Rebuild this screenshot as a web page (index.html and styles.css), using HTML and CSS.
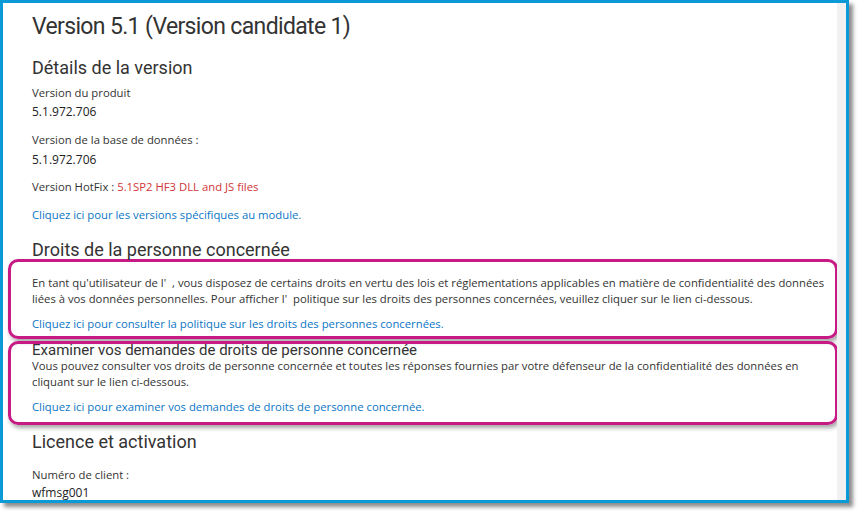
FILE: index.html
```html
<!DOCTYPE html>
<html lang="fr">
<head>
<meta charset="utf-8">
<link rel="stylesheet" href="styles.css">
</head>
<body>
<div class="frame">
  <div class="content">
    <h1 class="title">Version 5.1 (Version candidate 1)</h1>
    <h2 class="h2 first">Détails de la version</h2>
    <div class="label m6">Version du produit</div>
    <div class="value m3">5.1.972.706</div>
    <div class="label m12">Version de la base de données :</div>
    <div class="value m4">5.1.972.706</div>
    <div class="label m11">Version HotFix : <span class="red">5.1SP2 HF3 DLL and JS files</span></div>
    <div class="link m12">Cliquez ici pour les versions spécifiques au module.</div>
    <h2 class="h2 droits">Droits de la personne concernée</h2>
    <div class="box box1">
      <p class="para">En tant qu'utilisateur de l'&nbsp;&nbsp;, vous disposez de certains droits en vertu des lois et réglementations applicables en matière de confidentialité des données liées à vos données personnelles. Pour afficher l'&nbsp; politique sur les droits des personnes concernées, veuillez cliquer sur le lien ci-dessous.</p>
      <div class="link m9">Cliquez ici pour consulter la politique sur les droits des personnes concernées.</div>
    </div>
    <div class="box box2">
      <h3 class="h3">Examiner vos demandes de droits de personne concernée</h3>
      <p class="para m2">Vous pouvez consulter vos droits de personne concernée et toutes les réponses fournies par votre défenseur de la confidentialité des données en cliquant sur le lien ci-dessous.</p>
      <div class="link m9">Cliquez ici pour examiner vos demandes de droits de personne concernée.</div>
    </div>
    <h2 class="h2 licence">Licence et activation</h2>
    <div class="label m14">Numéro de client :</div>
    <div class="value m2">wfmsg001</div>
  </div>
  <div class="scrollbar"></div>
</div>
</body>
</html>
```
FILE: styles.css
```css
html, body {
  margin: 0;
  padding: 0;
  background: #ffffff;
}
body {
  width: 862px;
  height: 516px;
  overflow: hidden;
  font-family: "Open Sans", "Noto Sans", sans-serif;
  color: #333333;
}
.frame {
  width: 843px;
  height: 497px;
  border: 3px solid #0a9ad8;
  display: flex;
  overflow: hidden;
  box-shadow: 4px 4px 4px rgba(0, 0, 0, 0.45);
  background: #fff;
}
.content {
  flex: 1;
  padding: 0 0 0 5px;
  overflow: hidden;
}
.scrollbar {
  width: 9px;
  flex: none;
  background: #f1f1f1;
}
.title {
  margin: 9px 0 0 24px;
  font-family: Roboto, sans-serif;
  font-weight: 400;
  font-size: 23px;
  letter-spacing: -0.65px;
  line-height: 30px;
  color: #333;
  white-space: nowrap;
}
.h2 {
  margin: 0 0 0 24px;
  font-family: Roboto, sans-serif;
  font-weight: 400;
  font-size: 18px;
  line-height: 22px;
  color: #333;
}
.h2.first { margin-top: 15px; }
.h2.droits { margin-top: 16px; }
.h2.licence { margin-top: 6px; }
.label, .value, .link {
  margin-left: 24px;
  font-size: 11.3px;
  line-height: 16px;
}
.value { font-size: 12px; color: #222; }
.m1 { margin-top: 1px; }
.m2 { margin-top: 2px; }
.m3 { margin-top: 3px; }
.m4 { margin-top: 4px; }
.m6 { margin-top: 6px; }
.m9 { margin-top: 9px; }
.m11 { margin-top: 11px; }
.m12 { margin-top: 12px; }
.m14 { margin-top: 14px; }
.red { color: #d13438; }
.link { color: #0b76c5; }
.box {
  margin-left: 0;
  width: 800px;
  border: 3px solid #c71a84;
  border-radius: 10px;
  box-shadow: 2px 3px 4px rgba(0, 0, 0, 0.35);
  padding: 0 3px 0 21px;
}
.box .link { margin-left: 0; }
.box1 {
  margin-top: -2px;
  padding-top: 13px;
  padding-bottom: 4px;
}
.box2 {
  margin-top: 2px;
  padding-top: 0;
  padding-bottom: 7px;
}
.para {
  margin: 0;
  font-size: 11.3px;
  line-height: 16px;
  color: #333;
}
.h3 {
  margin: -2px 0 0 0;
  font-family: Roboto, sans-serif;
  font-weight: 400;
  font-size: 15px;
  line-height: 16px;
  color: #333;
}
```
